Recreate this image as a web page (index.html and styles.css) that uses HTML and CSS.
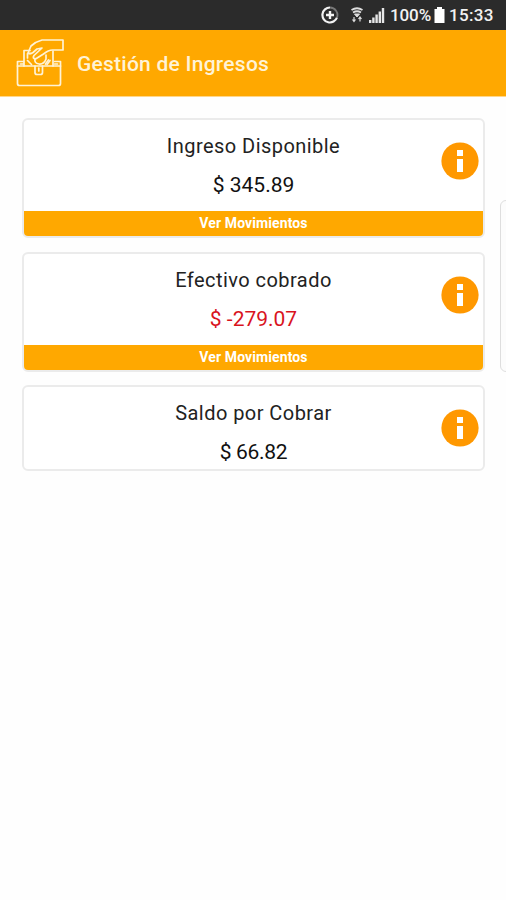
FILE: index.html
```html
<!DOCTYPE html>
<html lang="es">

<head>
    <meta charset="UTF-8">
    <meta name="viewport" content="width=device-width, initial-scale=1.0">
    <title>Gestión de Ingresos</title>
    <link rel="stylesheet" href="styles.css">
</head>

<body>
    <div class="status-bar">
        <svg class="status-sync" width="18" height="18" viewBox="0 0 18 18" fill="none" stroke="#f2f2f2">
            <path d="M9 1.500a7.500 7.500 0 1 0 7 10" stroke-width="2.200" />
            <path d="M9 1.500a7.500 7.500 0 0 1 7 10" stroke="#777" stroke-width="1.800" />
            <path d="M9 5v8M5 9h8" stroke-width="2.400" />
        </svg>
        <svg class="status-wifi" width="12" height="16" viewBox="0 0 12 16" fill="none" stroke="#ddd">
            <path d="M.5 3q5.500-3.500 11 0M2 5.500q4-2.500 8 0" stroke-width="1.800" />
            <path d="M3.500 7h5L6 10z" fill="#ddd" />
            <path d="M3 10v4M1.500 12.500L3 14.500l1.500-2M9 14.500v-4M7.500 12L9 10l1.500 2" stroke-width="1.200" />
        </svg>
        <svg class="status-signal" width="16" height="16" viewBox="0 0 16 16" fill="#e6e6e6">
            <path d="M0 13h2.400v3H0zM3.200 10.500h2.400V16H3.200zM6.400 7.500h2.400V16H6.400zM9.600 4.500H12V16H9.600zM12.800 1h2.400v15h-2.400z" />
        </svg>
        <span class="battery-text">100%</span>
        <svg class="status-battery" width="11" height="16" viewBox="0 0 11 16" fill="#fff">
            <path d="M3 0h5v2h2.500v14H.5V2H3z" />
        </svg>
        <span class="clock">15:33</span>
    </div>

    <header>
        <svg class="logo" width="49" height="50" viewBox="0 0 49 50" fill="none" stroke="#fff3d6" stroke-width="1.700" stroke-linejoin="round" stroke-linecap="round">
            <!-- wallet -->
            <path d="M2.500 28h43v17.500a2 2 0 0 1-2 2h-39a2 2 0 0 1-2-2z" />
            <path d="M2.500 28v-4.500h6M45.500 28v-4.500h-6M5.500 26h3M39.500 26h3" />
            <path d="M20 28v6.500q0 2 2 2h3.500q2 0 2-2v-6.500M23.800 30v3" />
            <!-- bill -->
            <path d="M9 28V12.500h6M38 13v15M12.500 20v-4.500h3M12.500 22.500l4 4M35 22.500l-3 4" />
            <path d="M20 20.500q-1 5 4 5.500t7-5v-4M30.500 26l3-4" />
            <!-- hand -->
            <path d="M48 2H27q-6 1.500-11 6l-3 7q2 1.500 5-.5l4-3.500 5-1-8 7.500q-2 3 1.500 3.500l8-5q5-4 9-4H48z" />
        </svg>
        <h1>Gestión de Ingresos</h1>
    </header>

    <main class="container">
        <section class="card">
            <div class="card-body">
                <h2>Ingreso Disponible</h2>
                <p class="amount">$ 345.89</p>
                <svg class="info" width="38" height="38" viewBox="0 0 38 38">
                    <circle cx="19" cy="19" r="18.600" fill="#ff9800" />
                    <path d="M16 8h6v6h-6zM16 17h6v13h-6z" fill="#fff" />
                </svg>
            </div>
            <button class="movements">Ver Movimientos</button>
        </section>

        <section class="card">
            <div class="card-body">
                <h2>Efectivo cobrado</h2>
                <p class="amount negative">$ -279.07</p>
                <svg class="info" width="38" height="38" viewBox="0 0 38 38">
                    <circle cx="19" cy="19" r="18.600" fill="#ff9800" />
                    <path d="M16 8h6v6h-6zM16 17h6v13h-6z" fill="#fff" />
                </svg>
            </div>
            <button class="movements">Ver Movimientos</button>
        </section>

        <section class="card card-last">
            <div class="card-body">
                <h2>Saldo por Cobrar</h2>
                <p class="amount pending">$ 66.82</p>
                <svg class="info" width="38" height="38" viewBox="0 0 38 38">
                    <circle cx="19" cy="19" r="18.600" fill="#ff9800" />
                    <path d="M16 8h6v6h-6zM16 17h6v13h-6z" fill="#fff" />
                </svg>
            </div>
        </section>
    </main>

    <div class="side-panel"></div>
</body>

</html>
```
FILE: styles.css
```css
* {
    box-sizing: border-box;
}

body {
    font-family: Roboto, "Liberation Sans", sans-serif;
    background-color: #fefefe;
    margin: 0;
    min-height: 100vh;
    position: relative;
    overflow: hidden;
}

.status-bar {
    height: 30px;
    background: #2b2b2b;
    color: #f2f2f2;
    display: flex;
    align-items: center;
    justify-content: flex-end;
    padding-right: 12px;
    font-size: 17px;
    font-weight: 500;
    line-height: 30px;
}

.status-sync {
    margin-right: 12px;
}

.status-wifi {
    margin-right: 6px;
}

.status-signal {
    margin-right: 5px;
}

.battery-text {
    width: 41px;
    letter-spacing: -0.1px;
    margin-right: 3px;
}

.status-battery {
    margin-right: 4px;
}

.clock {
    width: 45px;
    letter-spacing: 0.3px;
}

header {
    height: 67px;
    background: #ffa800;
    border-bottom: 1px solid #ffd68a;
    display: flex;
    align-items: center;
    padding-left: 15px;
}

.logo {
    margin-right: 13px;
}

h1 {
    margin: 2px 0 0;
    color: #fff3d6;
    font-size: 21px;
    font-weight: 500;
    letter-spacing: 0.25px;
}

.container {
    padding: 21px 21px 0 22px;
}

.card {
    background: #fff;
    border: 2px solid #ebebeb;
    border-radius: 6px;
    margin-bottom: 13.5px;
    overflow: hidden;
}

.card-body {
    height: 91px;
    padding-top: 12px;
    text-align: center;
    position: relative;
}

.card-last .card-body {
    height: 82px;
}

h2 {
    margin: 0;
    color: #222;
    font-size: 20px;
    font-weight: 400;
    line-height: 28px;
    letter-spacing: 0.45px;
}

.amount {
    margin: 11px 0 0;
    color: #111;
    font-size: 21px;
    line-height: 28px;
}

.negative {
    color: #d9141e;
}

.pending {
    letter-spacing: -0.3px;
}

.info {
    position: absolute;
    top: 22px;
    right: 4px;
}

.movements {
    display: block;
    width: 100%;
    height: 25px;
    padding: 0;
    border: none;
    background: #ffa800;
    color: #fff;
    font-family: inherit;
    font-size: 14px;
    font-weight: 700;
    line-height: 25px;
    letter-spacing: 0.1px;
    cursor: pointer;
}

/* edge of the next panel */
.side-panel {
    position: absolute;
    top: 200px;
    right: -14px;
    width: 20px;
    height: 172px;
    background: #fcfcfc;
    border: 1px solid #dedede;
    border-radius: 6px;
}
```
